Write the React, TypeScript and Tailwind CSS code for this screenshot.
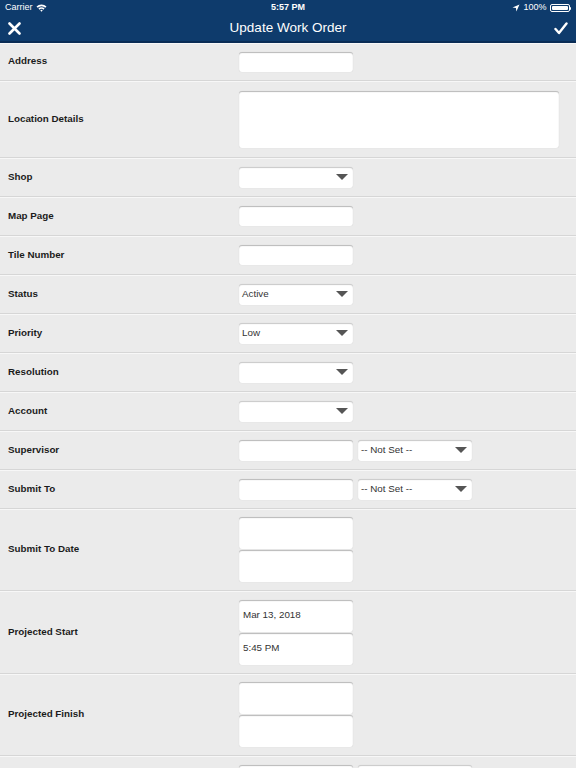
import React from "react";

const FONT = { fontFamily: '"Liberation Sans", Arial, Helvetica, sans-serif' };

function Tri() {
  return (
    <svg width="12" height="6" viewBox="0 0 12 6" className="absolute right-[5px] top-1/2 -translate-y-1/2">
      <polygon points="0,0 12,0 6,6" fill="#555" />
    </svg>
  );
}

function Input({ h = 21, w = 114, text }: { h?: number; w?: number; text?: string }) {
  return (
    <div
      className="bg-white rounded-[3px] shadow-[inset_0_1px_1px_rgba(0,0,0,0.28),0_0_1px_rgba(0,0,0,0.12)] flex items-center pl-[4px] text-[9.8px] text-[#333] shrink-0"
      style={{ height: h, width: w }}
    >
      {text}
    </div>
  );
}

function Select({ text }: { text?: string }) {
  return (
    <div className="relative bg-white rounded-[3px] shadow-[inset_0_1px_1px_rgba(0,0,0,0.22),0_0_1px_rgba(0,0,0,0.12)] h-[21px] w-[114px] flex items-center pl-[3px] text-[9.8px] text-[#333] shrink-0">
      {text}
      <Tri />
    </div>
  );
}

function Row({ label, h, children }: { label: string; h: number; children: React.ReactNode }) {
  return (
    <div
      className="flex items-center border-b border-[#d6d6d6] shadow-[inset_0_1px_0_#f7f7f7]"
      style={{ height: h }}
    >
      <div className="w-[239px] pl-[8px] text-[9.8px] font-bold text-[#1b1b1b] shrink-0">{label}</div>
      <div className="flex items-center gap-[5px]">{children}</div>
    </div>
  );
}

function Stack({ a, b }: { a?: string; b?: string }) {
  return (
    <div className="flex flex-col gap-[1px]">
      <Input h={32} text={a} />
      <Input h={32} text={b} />
    </div>
  );
}

export default function App() {
  return (
    <div className="w-[576px] h-[768px] overflow-hidden bg-[#ebebeb]" style={FONT}>
      <div className="h-[43px] bg-[#0e3b6c] border-b-2 border-[#0a2c55] text-white">
        <div className="h-[16px] relative flex items-center px-[5px] text-[9px]">
          <div className="flex items-center gap-[3px]">
            <span>Carrier</span>
            <svg width="11" height="8" viewBox="0 0 11 8">
              <path d="M0.5 2.6 A7 7 0 0 1 10.5 2.6 L9.3 3.8 A5.3 5.3 0 0 0 1.7 3.8 Z" fill="white" />
              <path d="M2.4 4.5 A4.3 4.3 0 0 1 8.6 4.5 L7.4 5.7 A2.6 2.6 0 0 0 3.6 5.7 Z" fill="white" />
              <path d="M4.3 6.4 A1.6 1.6 0 0 1 6.7 6.4 L5.5 7.7 Z" fill="white" />
            </svg>
          </div>
          <div className="absolute left-1/2 -translate-x-1/2 font-bold">5:57 PM</div>
          <div className="ml-auto flex items-center gap-[3px]">
            <svg width="8" height="8" viewBox="0 0 8 8">
              <polygon points="7.5,0.5 0.5,3.6 3.9,4.1 4.4,7.5" fill="white" />
            </svg>
            <span>100%</span>
            <div className="flex items-center">
              <div className="w-[20px] h-[8px] border border-white rounded-[2px] p-[1px]">
                <div className="w-full h-full bg-white rounded-[1px]" />
              </div>
              <div className="w-[1.5px] h-[3px] bg-white rounded-r" />
            </div>
          </div>
        </div>
        <div className="h-[24px] relative flex items-center px-[8px]">
          <svg width="13" height="13" viewBox="0 0 13 13">
            <path d="M1.5 1.5 L11.5 11.5 M11.5 1.5 L1.5 11.5" stroke="white" strokeWidth="2.6" strokeLinecap="round" />
          </svg>
          <div className="absolute left-1/2 -translate-x-1/2 text-[13.5px]">Update Work Order</div>
          <svg width="14" height="13" viewBox="0 0 14 13" className="ml-auto">
            <path d="M1.5 7 L5 11 L12.5 1.5" stroke="white" strokeWidth="2.4" fill="none" strokeLinecap="round" strokeLinejoin="round" />
          </svg>
        </div>
      </div>

      <Row label="Address" h={38}>
        <Input h={20} />
      </Row>
      <Row label="Location Details" h={77}>
        <Input h={57} w={320} />
      </Row>
      <Row label="Shop" h={39}>
        <Select />
      </Row>
      <Row label="Map Page" h={39}>
        <Input h={20} />
      </Row>
      <Row label="Tile Number" h={39}>
        <Input h={20} />
      </Row>
      <Row label="Status" h={39}>
        <Select text="Active" />
      </Row>
      <Row label="Priority" h={39}>
        <Select text="Low" />
      </Row>
      <Row label="Resolution" h={39}>
        <Select />
      </Row>
      <Row label="Account" h={39}>
        <Select />
      </Row>
      <Row label="Supervisor" h={39}>
        <Input h={21} />
        <Select text="-- Not Set --" />
      </Row>
      <Row label="Submit To" h={39}>
        <Input h={21} />
        <Select text="-- Not Set --" />
      </Row>
      <Row label="Submit To Date" h={82}>
        <Stack />
      </Row>
      <Row label="Projected Start" h={83}>
        <Stack a="Mar 13, 2018" b="5:45 PM" />
      </Row>
      <Row label="Projected Finish" h={82}>
        <Stack />
      </Row>
      <Row label="" h={39}>
        <Input h={21} />
        <Select />
      </Row>
    </div>
  );
}
